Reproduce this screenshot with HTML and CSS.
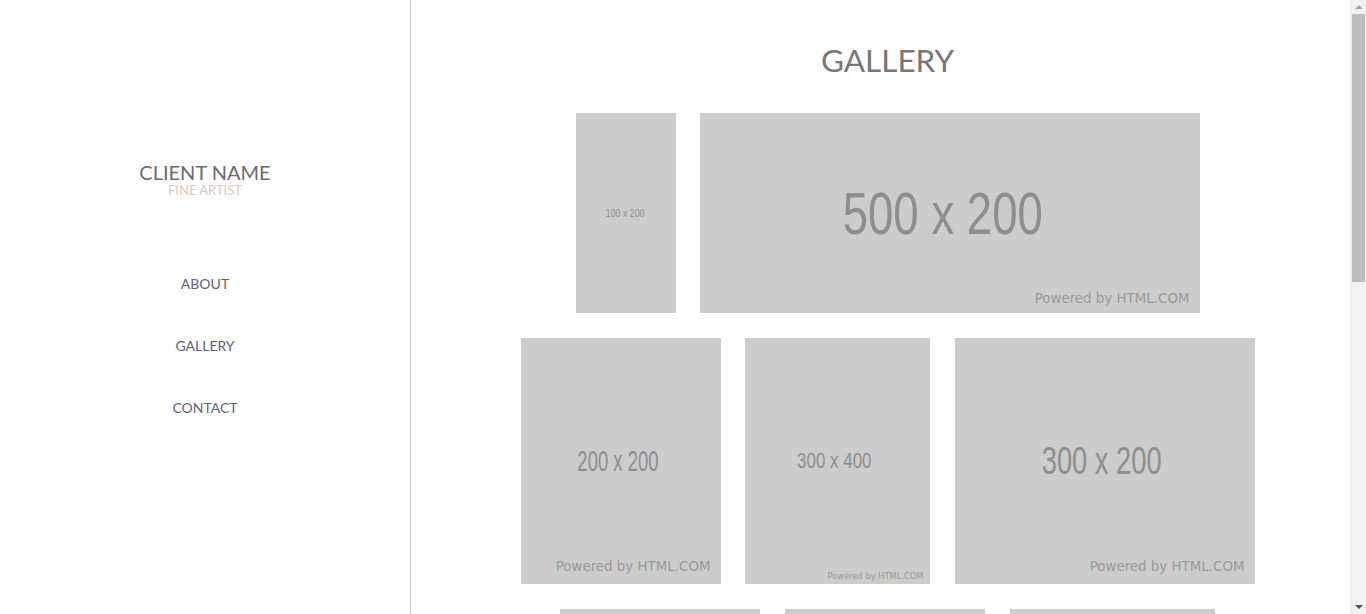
FILE: index.html
```html
<!DOCTYPE html>
<html lang="en">
<head>
<meta charset="utf-8">
<title>Client Name - Gallery</title>
<link rel="stylesheet" href="styles.css">
</head>
<body>
<div class="layout">
  <aside class="sidebar">
    <div class="brand">
      <div class="brand-name">CLIENT NAME</div>
      <div class="brand-sub">FINE ARTIST</div>
    </div>
    <nav class="nav">
      <a class="nav-link" href="#">ABOUT</a>
      <a class="nav-link" href="#">GALLERY</a>
      <a class="nav-link" href="#">CONTACT</a>
    </nav>
  </aside>
  <main class="main">
    <h1 class="title">GALLERY</h1>
    <div class="rows">
      <div class="row">
        <div class="ph ph-100x200"><span class="ph-label">100 x 200</span></div>
        <div class="ph ph-500x200"><span class="ph-label">500 x 200</span><span class="ph-powered">Powered by HTML.COM</span></div>
      </div>
      <div class="row row-tall">
        <div class="ph ph-200x200"><span class="ph-label">200 x 200</span><span class="ph-powered">Powered by HTML.COM</span></div>
        <div class="ph ph-300x400"><span class="ph-label">300 x 400</span><span class="ph-powered ph-powered-small">Powered by HTML.COM</span></div>
        <div class="ph ph-300x200"><span class="ph-label">300 x 200</span><span class="ph-powered">Powered by HTML.COM</span></div>
      </div>
      <div class="row row-tall row-wide">
        <div class="ph ph-r3a"><span class="ph-label">200 x 200</span><span class="ph-powered">Powered by HTML.COM</span></div>
        <div class="ph ph-r3b"><span class="ph-label">200 x 200</span><span class="ph-powered">Powered by HTML.COM</span></div>
        <div class="ph ph-r3c"><span class="ph-label">200 x 200</span><span class="ph-powered">Powered by HTML.COM</span></div>
      </div>
      <div class="row">
        <div class="ph ph-r4a"><span class="ph-label">400 x 200</span><span class="ph-powered">Powered by HTML.COM</span></div>
        <div class="ph ph-r4b"><span class="ph-label">200 x 200</span><span class="ph-powered">Powered by HTML.COM</span></div>
      </div>
    </div>
  </main>
</div>
<div class="scrollbar" aria-hidden="true">
  <div class="sb-arrow sb-up"></div>
  <div class="sb-track"><div class="sb-thumb"></div></div>
  <div class="sb-arrow sb-down"></div>
</div>
</body>
</html>
```

FILE: styles.css
```css
html, body {
  margin: 0;
  padding: 0;
  background: #ffffff;
}

body {
  font-family: Lato, "Open Sans", sans-serif;
  color: #666;
}

.layout {
  display: flex;
  min-height: 1340px;
  margin-right: 16px;
}

.sidebar {
  width: 410px;
  flex: 0 0 410px;
  border-right: 1px solid #cfcfcf;
  display: flex;
  flex-direction: column;
  align-items: center;
  padding-top: 161px;
}

.brand {
  display: flex;
  flex-direction: column;
  align-items: center;
}

.brand-name {
  font-size: 20px;
  line-height: 22px;
  color: #6b6b70;
}

.brand-sub {
  font-size: 13px;
  line-height: 14px;
  color: #d6c8c2;
}

.nav {
  display: flex;
  flex-direction: column;
  align-items: center;
  gap: 44px;
  margin-top: 78px;
}

.nav-link {
  font-size: 14px;
  line-height: 18px;
  color: #5e6372;
  text-decoration: none;
}

.main {
  flex: 1;
  padding-left: 14px;
  display: flex;
  flex-direction: column;
  align-items: center;
}

.title {
  margin: 40px 0 0;
  font-weight: 400;
  font-size: 31.5px;
  line-height: 40px;
  color: #77777a;
}

.rows {
  margin-top: 33px;
  display: flex;
  flex-direction: column;
  gap: 25px;
  align-items: center;
}

.row {
  display: flex;
  gap: 24px;
}

.row-wide {
  gap: 25px;
}

.ph {
  position: relative;
  background: #cccccc;
  display: flex;
  align-items: center;
  justify-content: center;
  overflow: hidden;
}

.ph-label {
  font-family: "Liberation Sans", Arial, sans-serif;
  color: #8e8e8e;
  display: inline-block;
  transform: scaleX(0.76);
  white-space: nowrap;
}

.ph-powered {
  position: absolute;
  right: 10px;
  bottom: 7px;
  font-family: "DejaVu Sans", sans-serif;
  font-size: 13.4px;
  color: #999;
  white-space: nowrap;
}

.row-tall .ph-powered {
  bottom: 10px;
}

.row-tall .ph-powered-small {
  font-size: 8.3px;
  right: 6px;
  bottom: 3px;
}

.ph-100x200 { width: 100px; height: 200px; }
.ph-100x200 .ph-label { font-size: 11px; transform: scaleX(0.8); }

.ph-500x200 { width: 500px; height: 200px; }
.ph-500x200 .ph-label { font-size: 60px; margin-left: -14px; }

.ph-200x200 { width: 200px; height: 246px; }
.ph-200x200 .ph-label { font-size: 30px; transform: scaleX(0.615); margin-left: -5px; }

.ph-300x400 { width: 185px; height: 246px; margin-right: 1px; }
.ph-300x400 .ph-label { font-size: 22px; transform: scaleX(0.77); margin-left: -5px; }

.ph-300x200 { width: 300px; height: 246px; }
.ph-300x200 .ph-label { font-size: 39px; transform: scaleX(0.70); margin-left: -5px; }

.ph-r3a { width: 200px; height: 246px; }
.ph-r3b { width: 200px; height: 246px; }
.ph-r3c { width: 205px; height: 246px; }
.ph-r3a .ph-label, .ph-r3b .ph-label, .ph-r3c .ph-label { font-size: 30px; transform: scaleX(0.615); }

.ph-r4a { width: 400px; height: 200px; }
.ph-r4b { width: 200px; height: 200px; }
.ph-r4a .ph-label { font-size: 48px; }
.ph-r4b .ph-label { font-size: 28px; }

.scrollbar {
  position: fixed;
  top: 0;
  right: 0;
  width: 16px;
  height: 100vh;
  background: #f1f1f1;
  border-left: 1px solid #ececec;
  box-sizing: border-box;
  display: flex;
  flex-direction: column;
}

.sb-arrow {
  height: 14px;
  flex: 0 0 14px;
  display: flex;
  align-items: center;
  justify-content: center;
}

.sb-up::before {
  content: "";
  border-left: 4px solid transparent;
  border-right: 4px solid transparent;
  border-bottom: 4px solid #a3a3a3;
}

.sb-down::before {
  content: "";
  border-left: 4px solid transparent;
  border-right: 4px solid transparent;
  border-top: 4px solid #505050;
}

.sb-track {
  flex: 1;
  padding: 0 1px;
}

.sb-thumb {
  height: 268px;
  background: #bdbdbd;
}
```
